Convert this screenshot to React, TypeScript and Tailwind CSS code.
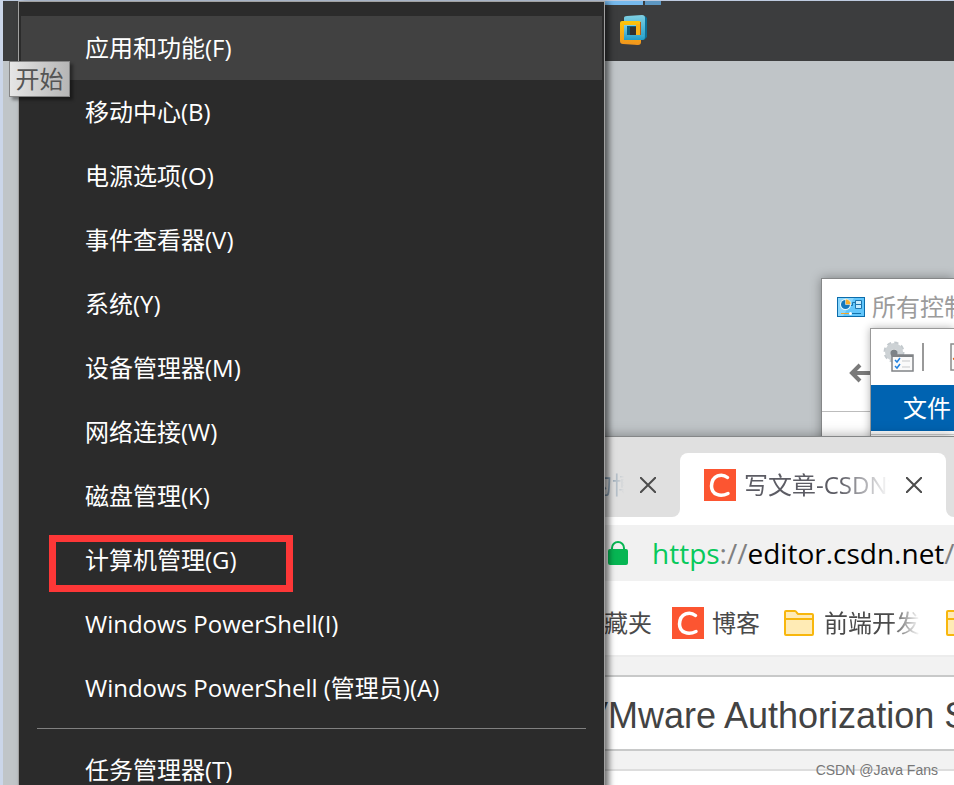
import React from "react";

const beforeSeparator = [
  "应用和功能(F)",
  "移动中心(B)",
  "电源选项(O)",
  "事件查看器(V)",
  "系统(Y)",
  "设备管理器(M)",
  "网络连接(W)",
  "磁盘管理(K)",
  "计算机管理(G)",
  "Windows PowerShell(I)",
  "Windows PowerShell (管理员)(A)",
];

function MenuItem({ label, active = false, marked = false }: { label: string; active?: boolean; marked?: boolean }) {
  return (
    <li className="relative">
      <button
        type="button"
        role="menuitem"
        className={`flex h-16 w-full items-center whitespace-nowrap pl-16 text-left text-white ${active ? "bg-[#414141]" : ""}`}
      >
        {label}
      </button>
      {marked && <span className="pointer-events-none absolute left-7 top-[7px] h-[57px] w-[244px] border-[7px] border-[#fd3737]" />}
    </li>
  );
}

function StartMenu() {
  return (
    <ul
      role="menu"
      className="absolute -bottom-8 left-[18px] top-px w-[587px] border border-[#a0a0a0] bg-[#2b2b2b] px-[2px] pt-[14px] shadow-[4px_2px_6px_rgba(0,0,0,0.55)]"
    >
      {beforeSeparator.map((label) => (
        <MenuItem key={label} label={label} active={label === "应用和功能(F)"} marked={label === "计算机管理(G)"} />
      ))}
      <li role="separator" className="mx-4 mb-[9px] mt-2 h-px bg-[#808080]" />
      <MenuItem label="任务管理器(T)" />
    </ul>
  );
}

function VmwareIcon() {
  return (
    <svg width="30" height="32" viewBox="0 0 30 32" aria-hidden="true">
      <defs>
        <linearGradient id="vmBlue" x1="0" y1="0" x2="0" y2="1">
          <stop offset="0" stopColor="#7fcfe2" />
          <stop offset="1" stopColor="#219cc8" />
        </linearGradient>
        <linearGradient id="vmGold" x1="0" y1="0" x2="0" y2="1">
          <stop offset="0" stopColor="#fdc60b" />
          <stop offset="1" stopColor="#f0941d" />
        </linearGradient>
      </defs>
      <path d="M22 1h4l2 2v19l-3 3h-4Z" fill="#0b6f98" />
      <path d="M8 1 23 0q3 0 3 3v19q0 3-3 3H5V3q0-2 3-2Z" fill="url(#vmBlue)" />
      <path d="M17 30 22 27v-3h-5Z" fill="#c9641a" />
      <path d="M3 6h17q2 0 2 2v19q0 3-3 3L4 29q-3 0-3-3V8q0-2 2-2Z" fill="url(#vmGold)" />
      <path d="M5 10h12v10h8v2q0 3-3 3H5Z" fill="url(#vmBlue)" />
      <path d="M8 11h9v9H8Z" fill="#0b5f83" />
      <path d="M11 12h6v8h-6Z" fill="#33322f" />
      <path d="M17 9h4v11h-4Z" fill="#fbb217" />
      <path d="M21 7h1v13h-1Z" fill="#ba5c17" />
    </svg>
  );
}

function Taskbar() {
  return (
    <header className="ml-[3px] flex h-[60px] flex-col bg-[#3c3d3e] pl-[602px]">
      <div className="flex h-1 gap-[2px]">
        <span className="w-[38px] bg-[#76b9ed]" />
        <span className="w-4 bg-[#5d97c2]" />
      </div>
      <button type="button" aria-label="VMware" className="ml-[14px] mt-[10px] w-[30px]">
        <VmwareIcon />
      </button>
    </header>
  );
}

function PanelIcon() {
  return (
    <svg width="28" height="20" viewBox="0 0 28 20" className="shrink-0" aria-hidden="true">
      <rect x="1" y="1" width="26" height="18" fill="#8ad7fd" />
      <path d="M17 1h10v18H6Z" fill="#62c6fb" />
      <rect x=".5" y=".5" width="27" height="19" fill="none" stroke="#0b6cab" />
      <circle cx="8.500" cy="7.500" r="5.500" fill="#e8f8ff" />
      <circle cx="8.500" cy="7.500" r="4.500" fill="#1478bd" />
      <path d="M8.500 7.500V2a5.500 5.500 0 0 1 5.500 5.500Z" fill="#f6ae2d" stroke="#fff" strokeWidth=".5" />
      <path d="M14 8.500h1.500v-3H18" stroke="#1d74ad" fill="none" />
      <path d="M18.500 3.500h6v4h-6ZM18.500 7.500h6v4h-6Z" fill="#c5ecff" stroke="#1d74ad" />
      <path d="M4 16.500h9" stroke="#f2a52a" />
      <path d="M14 16.500h10" stroke="#1473ad" />
      <circle cx="13.500" cy="16.500" r="1.500" fill="#fff" />
    </svg>
  );
}

function GearListIcon() {
  return (
    <svg width="32" height="32" viewBox="0 0 32 32" className="shrink-0" aria-hidden="true">
      <circle cx="11" cy="11" r="9" fill="none" stroke="#c3c9cd" strokeWidth="3" strokeDasharray="4 3.070" />
      <circle cx="11" cy="11" r="6" fill="none" stroke="#cdd2d5" strokeWidth="6" />
      <circle cx="11" cy="12" r="3.500" fill="#7d8388" />
      <rect x="9" y="14" width="21" height="16" fill="#fafafa" stroke="#808386" strokeWidth="1.500" />
      <path d="M9 15h21" stroke="#808386" strokeWidth="2" />
      <path d="m12 19 2 2 3-4M12 25l2 2 3-4" fill="none" stroke="#2382df" strokeWidth="1.500" />
      <path d="M19 20h8M19 26h8" stroke="#c7c9cb" />
    </svg>
  );
}

function ControlPanelWindow() {
  return (
    <section className="absolute left-[821px] right-0 top-[278px] h-[240px] overflow-hidden border-l border-t border-[#858788] bg-white shadow-[0_0_10px_rgba(0,0,0,0.35)]">
      <div className="flex h-14 items-center gap-[7px] whitespace-nowrap pl-[15px] text-[#9b9b9b]">
        <PanelIcon />
        所有控制面板项
      </div>
      <div className="flex h-[77px] items-center border-b border-[#bcbcbc] pl-[27px]">
        <button type="button" aria-label="返回">
          <svg width="24" height="20" viewBox="0 0 24 20" fill="none" stroke="#7a7a7a" strokeWidth="4" aria-hidden="true">
            <path d="M24 10H3M11 2 3 10l8 8" />
          </svg>
        </button>
      </div>
    </section>
  );
}

function ExplorerWindow() {
  return (
    <section className="absolute left-[870px] right-0 top-[328px] h-[180px] overflow-hidden border-l border-t border-[#999] bg-white shadow-[0_0_8px_rgba(0,0,0,0.3)]">
      <div className="flex h-14 items-center pl-3">
        <GearListIcon />
        <span className="ml-[7px] h-7 w-[2px] shrink-0 bg-[#999]" />
        <svg width="22" height="28" viewBox="0 0 22 28" className="ml-[26px] shrink-0" aria-hidden="true">
          <rect x="1" y="1" width="20" height="26" fill="#fafafa" stroke="#8b8b8b" strokeWidth="1.500" />
          <path d="m3 16 4-1 4 4 8-11" fill="none" stroke="#e2661b" strokeWidth="2" />
        </svg>
      </div>
      <nav className="flex h-[46px] items-center bg-[#0063b1] pl-8 text-white">
        <button type="button" className="whitespace-nowrap">文件</button>
      </nav>
      <div className="mt-[3px] h-px bg-[#d0d0d0]" />
    </section>
  );
}

function CsdnIcon() {
  return (
    <svg width="32" height="32" viewBox="0 0 32 32" className="shrink-0" aria-hidden="true">
      <path d="M0 0h32v32H0Z" fill="#fc5531" />
      <path d="M23.500 8.500C18 4 8 6 7.500 17c0 9 9 11 16.500 7.500" fill="none" stroke="#fff" strokeWidth="3.500" strokeLinecap="round" />
    </svg>
  );
}

function CloseButton() {
  return (
    <button type="button" aria-label="关闭标签页" className="shrink-0">
      <svg width="16" height="16" viewBox="0 0 16 16" stroke="#4c4c4c" strokeWidth="2" aria-hidden="true">
        <path d="m0 0 16 16M16 0 0 16" />
      </svg>
    </button>
  );
}

function FolderIcon() {
  return (
    <svg width="30" height="26" viewBox="0 0 30 26" className="shrink-0" aria-hidden="true">
      <path d="M1 2q0-1 1-1h9q1 0 2 2l1 1h14q1 0 1 1v19q0 1-1 1H2q-1 0-1-1Z" fill="#ffebb5" stroke="#f8b70d" strokeWidth="2" />
      <path d="M1 9h28" stroke="#f8b70d" strokeWidth="2" />
    </svg>
  );
}

function TabStrip() {
  return (
    <div className="bg-white">
      <div className="h-4 bg-[#e0e0e0]" />
      <div className="flex h-16">
        <div className="flex w-[140px] shrink-0 items-center gap-4 rounded-br-lg bg-[#e0e0e0] pl-6">
          <span className="w-[60px] overflow-hidden whitespace-nowrap text-[#7890a5] [mask-image:linear-gradient(to_right,black_70%,transparent)]">
            我的博客
          </span>
          <CloseButton />
        </div>
        <div className="shrink-0 bg-[#e0e0e0]">
          <div className="flex h-full w-[266px] items-center rounded-t-lg bg-white pl-6">
            <CsdnIcon />
            <span className="ml-2 mr-4 w-[146px] overflow-hidden whitespace-nowrap text-[#5c5c64] [mask-image:linear-gradient(to_right,black_65%,transparent)]">
              写文章-CSDN博客
            </span>
            <CloseButton />
          </div>
        </div>
        <div className="flex-1 rounded-bl-lg bg-[#e0e0e0]" />
      </div>
    </div>
  );
}

function BrowserWindow() {
  return (
    <section className="absolute bottom-0 left-[540px] right-0 top-[436px] overflow-hidden border-t border-[#858788] bg-white shadow-[0_0_12px_rgba(0,0,0,0.35)]">
      <TabStrip />
      <div className="mt-2 flex h-14 items-center bg-[#f1f1f1] pl-[68px]">
        <svg width="20" height="24" viewBox="0 0 20 24" className="shrink-0" aria-hidden="true">
          <path d="M4 10V7a6 6 0 0 1 12 0v3" fill="none" stroke="#07b653" strokeWidth="2" />
          <rect y="8" width="20" height="16" rx="2" fill="#07b653" />
        </svg>
        <a href="#editor" className="ml-6 whitespace-nowrap text-[28px] leading-9 text-black">
          <span className="text-[#07c95b]">https</span>
          <span className="text-[#808080]">://</span>
          editor.csdn.net
          <span className="text-[#808080]">/</span>
        </a>
      </div>
      <nav className="flex h-[74px] items-center whitespace-nowrap pb-1 pt-[14px] pl-10 text-[#4a4a4a]">
        <a href="#favorites">收藏夹</a>
        <a href="#blog" className="ml-5 flex items-center gap-2">
          <CsdnIcon />
          博客
        </a>
        <a href="#frontend" className="ml-6 flex items-center gap-[10px]">
          <FolderIcon />
          <span className="w-24 overflow-hidden [mask-image:linear-gradient(to_right,black_70%,transparent)]">前端开发</span>
        </a>
        <a href="#more" aria-label="文件夹" className="ml-[26px] shrink-0">
          <FolderIcon />
        </a>
      </nav>
      <main>
        <div className="h-5 border-t-2 border-[#ececec] bg-[#f2f2f2]" />
        <input
          aria-label="文章标题"
          defaultValue="VMware Authorization Service"
          className="block h-[76px] w-full border-y-2 border-[#c8c9c9] bg-white pb-0 pl-[44px] pt-[6px] font-['Liberation_Sans',sans-serif] text-[36px] text-[#434343] outline-none"
        />
        <div className="h-5 border-b-2 border-[#dddddd] bg-[#f2f2f2]" />
      </main>
    </section>
  );
}

export default function App() {
  return (
    <div className="relative h-screen overflow-hidden bg-[#c0c5c8] font-['Open_Sans','Noto_Sans_CJK_SC',sans-serif] text-2xl leading-8">
      <div className="h-px bg-[#becbe0]" />
      <Taskbar />
      <ControlPanelWindow />
      <ExplorerWindow />
      <BrowserWindow />
      <StartMenu />
      <div className="absolute inset-y-0 left-0 w-[3px] bg-[#cbd6e9]" />
      <div
        role="tooltip"
        className="absolute left-[9px] top-[61px] flex h-9 w-[61px] items-center justify-center border border-[#858585] bg-linear-to-r from-[#e6e6e6] to-[#b5b5b5] text-[#555] shadow-[3px_3px_3px_rgba(0,0,0,0.4)]"
      >
        开始
      </div>
      <p className="absolute bottom-[5px] right-4 font-['Liberation_Sans',sans-serif] text-[14px] leading-5 text-[#777]">
        CSDN @Java Fans
      </p>
    </div>
  );
}
